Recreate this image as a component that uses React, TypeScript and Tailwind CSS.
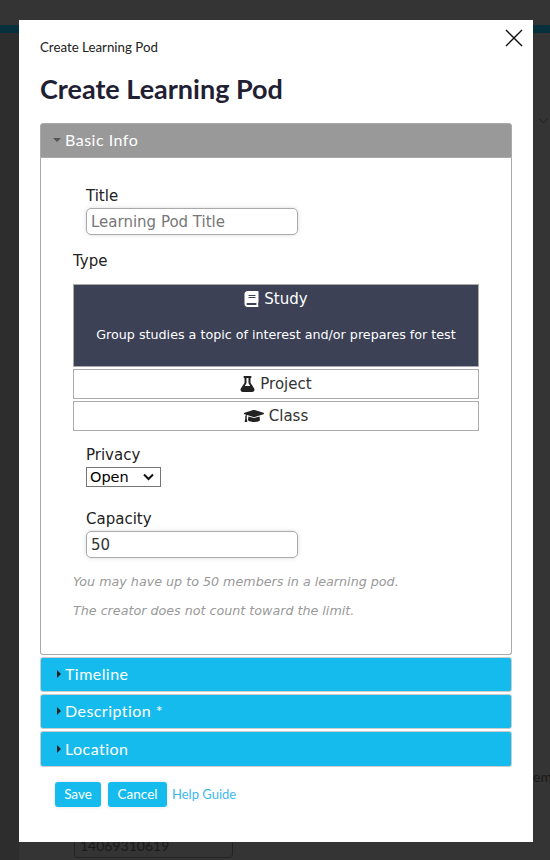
import { FaBook, FaFlask, FaGraduationCap } from "react-icons/fa";

function Panel({ label, tall }: { label: string; tall?: boolean }) {
  return (
    <div className={`flex ${tall ? "h-[36px] pb-[1px]" : "h-[35px] pb-[2px]"} items-center rounded-[3px] border border-[#ccc] bg-[#16bbee] pl-[16px] text-[16px] tracking-[0.45px] text-white`}>
      <span className="mr-[4px] h-0 w-0 border-y-[4px] border-l-[4px] border-y-transparent border-l-[#222]" />
      {label}
    </div>
  );
}

export default function App() {
  return (
    <div className="relative h-[860px] w-[550px] overflow-hidden bg-[#343434] font-['Lato',sans-serif]">
      <div className="mt-[25px] h-[8px] bg-[#06303c]" />
      <div className="absolute bottom-0 left-0 top-[33px] w-[19px] bg-[#2d2d2d]" />
      <div className="absolute left-[74px] top-[832px] h-[26px] w-[159px] rounded-[4px] border border-[#222] pl-[5px] text-[14px] leading-[26px] text-[#1a1a1a]">14069310619</div>
      <div className="absolute left-[533px] top-[766px] text-[14px] text-[#1a1a1a]">em</div>
      <svg className="absolute left-[539px] top-[117px] h-[8px] w-[9px]" viewBox="0 0 9 8" fill="none" stroke="#222" strokeWidth="1">
        <path d="M0.5 1.5 L4.5 6 L8.5 1.5" />
      </svg>

      <div className="absolute left-[19px] top-[20px] h-[822px] w-[514px] bg-white px-[21px] pt-[19px] text-[#222]">
        <svg className="absolute right-[10px] top-[9px] h-[18px] w-[18px]" viewBox="0 0 18 18" fill="none" stroke="#111" strokeWidth="1.4">
          <path d="M1 1 L17 17 M17 1 L1 17" />
        </svg>
        <div className="text-[13.3px] leading-[16px]">Create Learning Pod</div>
        <h1 className="mt-[18px] text-[27px] font-bold leading-[32px] text-[#1f2033]">Create Learning Pod</h1>

        <div className="mt-[18px]">
          <div className="flex h-[35px] items-center rounded-t-[3px] border border-[#aaa] bg-[#999] pb-[2px] pl-[12px] text-[16px] tracking-[0.5px] text-white">
            <span className="mr-[4px] h-0 w-0 border-x-[4px] border-t-[4px] border-x-transparent border-t-[#555]" />
            Basic Info
          </div>
          <div className="h-[497px] rounded-b-[3px] border border-t-0 border-[#aaa] px-[32px] pt-[27px] font-['DejaVu_Sans',sans-serif] text-[15px] text-[#333]">
            <div className="pl-[13px]">
              <div className="pt-[2px] leading-[18px] text-[#222]">Title</div>
              <input
                readOnly
                placeholder="Learning Pod Title"
                className="mt-[3px] block h-[27px] w-[212px] rounded-[5px] border border-[#aaa] px-[4px] text-[15px] shadow-[0_0_4px_rgba(0,0,0,0.15)] placeholder:text-[#777]"
              />
            </div>
            <div className="mt-[15px] pt-[2px] leading-[18px] text-[#222]">Type</div>
            <div className="mt-[14px] flex h-[83px] flex-col items-center border border-[#aaa] bg-[#3c4156] pt-[4px] text-white">
              <div className="flex items-center gap-[5px] leading-[20px]">
                <FaBook className="h-[16px] w-[15px]" />
                Study
              </div>
              <div className="mt-[17px] text-[12.7px] leading-[18px]">Group studies a topic of interest and/or prepares for test</div>
            </div>
            <div className="mt-[2px] flex h-[30px] items-center justify-center gap-[5px] border border-[#aaa]">
              <FaFlask className="h-[16px] w-[15px] text-[#222]" />
              Project
            </div>
            <div className="mt-[2px] flex h-[30px] items-center justify-center gap-[5px] border border-[#aaa]">
              <FaGraduationCap className="h-[16px] w-[20px] text-[#222]" />
              Class
            </div>
            <div className="mt-[13px] pl-[13px]">
              <div className="pt-[2px] leading-[18px] text-[#222]">Privacy</div>
              <div className="relative mt-[3px] h-[20px] w-[75px]">
                <select className="block h-[20px] w-[75px] appearance-none border border-[#767676] bg-white pl-[3px] text-[14.5px] leading-[18px] text-black">
                  <option>Open</option>
                </select>
                <svg className="pointer-events-none absolute left-[57px] top-[6px] h-[8px] w-[11px]" viewBox="0 0 11 8" fill="none" stroke="#111" strokeWidth="2">
                  <path d="M1 1.5 L5.5 6 L10 1.5" />
                </svg>
              </div>
              <div className="mt-[21px] pt-[2px] leading-[18px] text-[#222]">Capacity</div>
              <input
                readOnly
                value="50"
                className="mt-[3px] block h-[27px] w-[212px] rounded-[5px] border border-[#aaa] px-[4px] text-[15px] shadow-[0_0_4px_rgba(0,0,0,0.15)]"
              />
            </div>
            <p className="mt-[15px] text-[12.7px] italic leading-[18px] text-[#999]">You may have up to 50 members in a learning pod.</p>
            <p className="mt-[11px] text-[12.7px] italic leading-[18px] text-[#999]">The creator does not count toward the limit.</p>
          </div>
        </div>

        <div className="mt-[2px] flex flex-col gap-[2px]">
          <Panel label="Timeline" />
          <Panel label="Description *" />
          <Panel label="Location" tall />
        </div>

        <div className="mt-[15px] flex items-center pl-[15px] text-[13.5px]">
          <button className="h-[25px] w-[46px] rounded-[3px] bg-[#16bbee] text-white shadow-[0_0_4px_rgba(0,0,0,0.12)]">Save</button>
          <button className="ml-[7px] h-[25px] w-[59px] rounded-[3px] bg-[#16bbee] text-white shadow-[0_0_4px_rgba(0,0,0,0.12)]">Cancel</button>
          <a className="ml-[5px] mt-[1px] text-[13px] text-[#3cb8ee]">Help Guide</a>
        </div>
      </div>
    </div>
  );
}
